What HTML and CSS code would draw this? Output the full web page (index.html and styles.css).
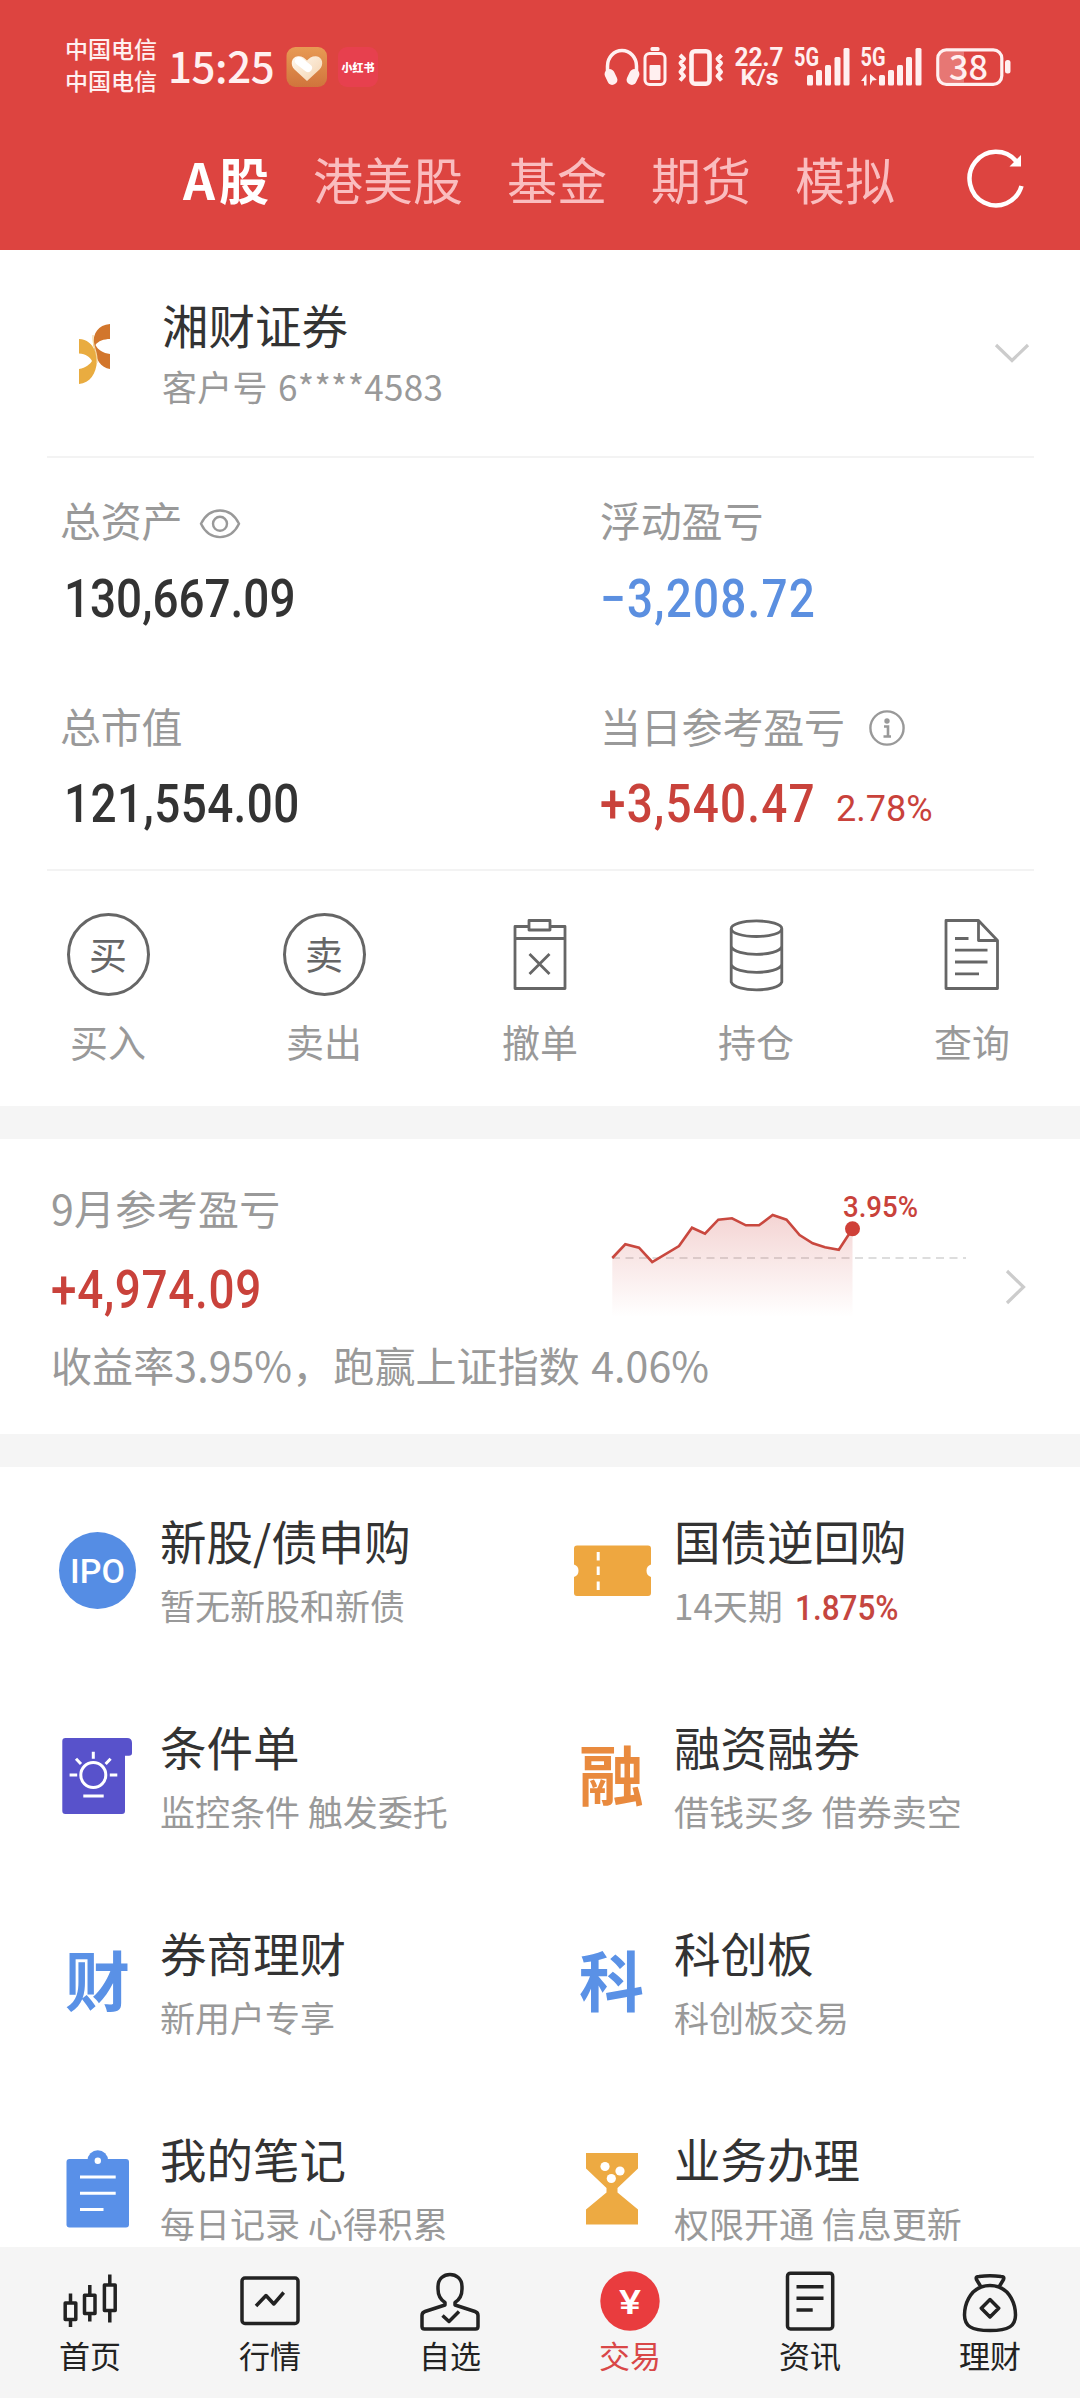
FILE: index.html
```html
<!DOCTYPE html>
<html lang="zh-CN">
<head>
<meta charset="utf-8">
<title>交易</title>
<link rel="stylesheet" href="styles.css">
</head>
<body>
<div class="app">
  <header class="header">
    <div class="status">
      <div class="carriers"><span>中国电信</span><span>中国电信</span></div>
      <div class="clock"><span>15:25</span></div>
      <svg class="app-icon" width="42" height="42" viewBox="286 45 42 42">
        <defs>
          <linearGradient id="gold" x1="0" y1="0" x2="0" y2="1"><stop offset="0" stop-color="#e89a54"/><stop offset="1" stop-color="#d0743c"/></linearGradient>
          <linearGradient id="cream" x1="0" y1="0" x2="1" y2="1"><stop offset="0" stop-color="#fff8ee"/><stop offset="1" stop-color="#f4d2ae"/></linearGradient>
        </defs>
        <rect x="286.500" y="46" width="40.500" height="40" rx="9" fill="url(#gold)"/>
        <path d="M307 80L294.500 68.500C290 64 291 56 298 55.200C302 55 305 57 307 59.500C309 57 312 55 316 55.200C323 56 324 64 319.500 68.500Z" fill="url(#cream)"/>
        <path d="M299 60L308 67" stroke="#fff" stroke-width="8" stroke-linecap="round"/>
      </svg>
      <div class="red-app"><span>小红书</span></div>
      <svg class="status-icons" width="412" height="42" viewBox="602 45 412 42" fill="#fff0f0">
        <g fill="none" stroke="#fff0f0">
          <path d="M607.500 72V65A14.500 15.500 0 0 1 636.500 65V72" stroke-width="3.500"/>
          <rect x="645" y="52.500" width="20" height="31" rx="4.500" stroke-width="3"/>
          <rect x="691.500" y="50.200" width="18" height="32.500" rx="3.500" stroke-width="4.600"/>
          <path d="M680 54L684 58L680.500 62L684 66.500L680.500 71L684 75L680 79.500M721.500 54L717.500 58L721 62L717.500 66.500L721 71L717.500 75L721.500 79.500" stroke-width="4" stroke-linejoin="round"/>
          <rect x="937.800" y="48.800" width="64" height="34.500" rx="8.500" stroke-width="3.200"/>
        </g>
        <rect x="606" y="68" width="10" height="16" rx="4.500" transform="rotate(-25 611 76)"/>
        <rect x="628" y="68" width="10" height="16" rx="4.500" transform="rotate(25 633 76)"/>
        <rect x="650.500" y="46" width="9" height="4" rx="1.500"/>
        <rect x="649.500" y="64" width="11" height="15" rx="1"/>
        <g class="net-text">
          <text x="734.500" y="64.500" textLength="49" lengthAdjust="spacingAndGlyphs">22.7</text>
          <text class="unit" x="740.500" y="84" textLength="38" lengthAdjust="spacingAndGlyphs">K/s</text>
          <text x="794" y="64.800" textLength="25" lengthAdjust="spacingAndGlyphs">5G</text>
          <text x="860.500" y="64.800" textLength="25" lengthAdjust="spacingAndGlyphs">5G</text>
        </g>
        <rect x="807" y="74" width="6" height="10.500" rx="1.500"/><rect x="816" y="69" width="6" height="15.500" rx="1.500"/><rect x="825" y="64" width="6" height="20.500" rx="1.500"/><rect x="834.500" y="56" width="6" height="28.500" rx="1.500"/><rect x="843.500" y="47" width="6" height="37.500" rx="1.500"/>
        <rect x="879" y="74" width="6" height="10.500" rx="1.500"/><rect x="888" y="69" width="6" height="15.500" rx="1.500"/><rect x="897" y="64" width="6" height="20.500" rx="1.500"/><rect x="906" y="56" width="6" height="28.500" rx="1.500"/><rect x="915.500" y="47" width="6" height="37.500" rx="1.500"/>
        <path d="M861 80L866.500 73V84.500H864V80ZM870 73L877 79L872.500 79.500L870 84.500Z"/>
        <path d="M946 50.500H964V81.500H946Q939.500 81.500 939.500 75V57Q939.500 50.500 946 50.500Z" opacity=".3"/>
        <rect x="1005" y="59" width="5.500" height="13.500" rx="2.500"/>
        <text class="battery-text" x="949" y="78.500" textLength="39" lengthAdjust="spacingAndGlyphs">38</text>
      </svg>
    </div>
    <nav class="tabs">
      <span class="tab tab-active">A股</span>
      <span class="tab">港美股</span>
      <span class="tab">基金</span>
      <span class="tab">期货</span>
      <span class="tab">模拟</span>
      <svg class="refresh" width="64" height="64" viewBox="965 147 64 64">
        <path d="M1022.500 187A26.500 26.800 0 1 1 1017 162" fill="none" stroke="#fff" stroke-width="4.500"/>
        <path d="M1022 156V167.500H1010.500Z" fill="#fff"/>
      </svg>
    </nav>
  </header>

  <main class="main">
    <section class="card">
      <div class="account">
        <svg class="broker-logo" width="34" height="64" viewBox="78 321 34 64">
          <path d="M110 323C98 324 93 332 93.500 344C95 358 101 367 110 368V353C103 352 98 349 95.500 344C98 340 104 338 110 338Z" fill="#d2762c"/>
          <path d="M79 338C87 338.500 92 343 94.500 349C96 352 97 357 97 360C96 373 90 382 79 383V368C86 367 90 363 92 360C90 356 86 353 79 352.500Z" fill="#e9ac40"/>
          <path d="M93 334C92 346 98 350 97 362" fill="none" stroke="#f5d9a0" stroke-width="1.200"/>
        </svg>
        <div class="account-text">
          <div class="broker">湘财证券</div>
          <div class="client">客户号 6****4583</div>
        </div>
        <svg width="40" height="30" viewBox="992 339 40 30"><path d="M996 345L1012 360.500L1028 345" fill="none" stroke="#ccc" stroke-width="3.200"/></svg>
      </div>
      <div class="assets">
        <div class="asset">
          <div class="label">总资产
            <svg class="eye" width="42" height="32" viewBox="199.500 508.500 42 32" fill="none" stroke="#999" stroke-width="2.400"><path d="M201.500 524.300C210 506.500 231 506.500 239.500 524.300C231 542 210 542 201.500 524.300Z"/><circle cx="220.500" cy="524.300" r="7"/></svg>
          </div>
          <div class="amount"><span class="num num-total">130,667.09</span></div>
        </div>
        <div class="asset">
          <div class="label">浮动盈亏</div>
          <div class="amount blue"><span class="num num-float">−3,208.72</span></div>
        </div>
        <div class="asset">
          <div class="label">总市值</div>
          <div class="amount"><span class="num num-market">121,554.00</span></div>
        </div>
        <div class="asset">
          <div class="label">当日参考盈亏
            <svg class="info" width="38" height="38" viewBox="868 709 38 38"><circle cx="887" cy="728" r="16.600" fill="none" stroke="#999" stroke-width="2.400"/><circle cx="887" cy="721" r="2.700" fill="#999"/><path d="M884 726.500H888V736M883.500 736.500H891" fill="none" stroke="#999" stroke-width="2.600"/></svg>
          </div>
          <div class="amount red"><span class="num num-today">+3,540.47</span><span class="pct">2.78%</span></div>
        </div>
      </div>
      <div class="actions">
        <div class="action">
          <div class="ring"><span>买</span></div>
          <span>买入</span>
        </div>
        <div class="action">
          <div class="ring"><span>卖</span></div>
          <span>卖出</span>
        </div>
        <div class="action">
          <svg class="line-icon" width="90" height="90" viewBox="495 909 90 90"><path d="M528 926.500H515V988.500H565V926.500H551M515 938.500H565M529 920.500H550V930H529ZM529.500 954L549.500 974M549.500 954L529.500 974"/></svg>
          <span>撤单</span>
        </div>
        <div class="action">
          <svg class="line-icon" width="90" height="90" viewBox="711 909 90 90"><ellipse cx="756.500" cy="928.700" rx="25.300" ry="7.800"/><path d="M731.200 928.700V982C735 992.500 778 992.500 781.800 982V928.700M731.200 946.500C735 957 778 957 781.800 946.500M731.200 964.500C735 975 778 975 781.800 964.500"/></svg>
          <span>持仓</span>
        </div>
        <div class="action">
          <svg class="line-icon" width="90" height="90" viewBox="927 909 90 90"><path d="M978.500 920.500H946V988.500H997.500V940.500ZM978.500 920.500V940.500H997.500M955 938.500H968.500M955 950.200H987.500M955 962H987.500M955 973.800H979"/></svg>
          <span>查询</span>
        </div>
      </div>
    </section>

    <section class="card profit">
      <div class="profit-body">
        <div class="profit-top">
          <div class="profit-figures">
            <div class="month">9月参考盈亏</div>
            <div class="amount red"><span class="num num-month">+4,974.09</span></div>
          </div>
          <svg class="chart" width="360" height="136" viewBox="610 1182 360 136">
            <defs><linearGradient id="fade" x1="0" y1="0" x2="0" y2="1"><stop offset="0" stop-color="#cf4642" stop-opacity=".23"/><stop offset="1" stop-color="#cf4642" stop-opacity="0"/></linearGradient></defs>
            <path d="M612 1257H966" stroke="#ddd" stroke-width="2" stroke-dasharray="8 5.500"/>
            <path d="M612.300 1257L625.300 1243.300L639 1246.700L652.200 1261L679 1245L692 1226.700L705 1232.700L718.300 1218.700L732 1217.300L745.900 1224.300H759L772.700 1214L786.500 1218.700L799.600 1234L812.700 1242.300L825 1246.300L838.800 1248.700L852.500 1227.700V1316H612.300Z" fill="url(#fade)"/>
            <path d="M612.300 1257L625.300 1243.300L639 1246.700L652.200 1261L679 1245L692 1226.700L705 1232.700L718.300 1218.700L732 1217.300L745.900 1224.300H759L772.700 1214L786.500 1218.700L799.600 1234L812.700 1242.300L825 1246.300L838.800 1248.700L852.500 1227.700" fill="none" stroke="#c9483f" stroke-width="2.600"/>
            <circle cx="852.500" cy="1227.700" r="7.500" fill="#cf4038"/>
            <text class="chart-label" x="843" y="1216" textLength="75" lengthAdjust="spacingAndGlyphs">3.95%</text>
          </svg>
        </div>
        <div class="profit-desc">收益率3.95%，跑赢上证指数 4.06%</div>
      </div>
      <svg width="30" height="44" viewBox="1000 1267 30 44"><path d="M1007 1273L1023.500 1289L1007 1305" fill="none" stroke="#ccc" stroke-width="3.200"/></svg>
    </section>

    <section class="card services">
      <div class="service">
        <svg width="110" height="130" viewBox="50 1507 110 130"><circle cx="97.500" cy="1570.500" r="38.500" fill="#558de4"/><text class="ipo" x="70" y="1583" textLength="55" lengthAdjust="spacing">IPO</text></svg>
        <div><div class="title">新股/债申购</div><div class="sub">暂无新股和新债</div></div>
      </div>
      <div class="service">
        <svg width="110" height="130" viewBox="564 1507 110 130"><path d="M577 1545.500H648Q651 1545.500 651 1548.500V1564.500Q646.500 1566 646.500 1570.700Q646.500 1575.500 651 1577V1593Q651 1596 648 1596H577Q574 1596 574 1593V1577Q578.500 1575.500 578.500 1570.700Q578.500 1566 574 1564.500V1548.500Q574 1545.500 577 1545.500Z" fill="#eea740"/><path d="M598.200 1552V1560.500M598.200 1566.500V1575M598.200 1581.500V1590" stroke="#fff" stroke-width="3"/></svg>
        <div><div class="title">国债逆回购</div><div class="sub">14天期 <span class="rate">1.875%</span></div></div>
      </div>
      <div class="service">
        <svg width="110" height="130" viewBox="50 1713 110 130"><path d="M65.500 1738H127Q132 1738 132 1743V1753Q132 1755.700 129 1755.700H125V1811Q125 1814 122 1814H65.300Q62.300 1814 62.300 1811V1741Q62.300 1738 65.500 1738Z" fill="#5852cb"/><g fill="none" stroke="#fff" stroke-width="3"><circle cx="93.300" cy="1775" r="12.500"/><path d="M69.600 1775H77.200M109.800 1775H117.300M93.300 1751.700V1758.800M76 1758.700L81 1764M110.600 1758.700L105.600 1764M83.300 1796H103.700" transform="translate(0 0)"/></g></svg>
        <div><div class="title">条件单</div><div class="sub">监控条件 触发委托</div></div>
      </div>
      <div class="service">
        <div class="glyph orange">融</div>
        <div><div class="title">融资融券</div><div class="sub">借钱买多 借券卖空</div></div>
      </div>
      <div class="service">
        <div class="glyph azure">财</div>
        <div><div class="title">券商理财</div><div class="sub">新用户专享</div></div>
      </div>
      <div class="service">
        <div class="glyph azure">科</div>
        <div><div class="title">科创板</div><div class="sub">科创板交易</div></div>
      </div>
      <div class="service">
        <svg width="110" height="130" viewBox="50 2125 110 130"><rect x="66.500" y="2159" width="62.500" height="68.500" rx="3" fill="#5990e8"/><circle cx="97.800" cy="2160.500" r="10.300" fill="#5990e8"/><circle cx="97.800" cy="2160.800" r="3.200" fill="#fff"/><path d="M80 2177H115.700M80 2193.300H115.700M80 2209.500H103.500" stroke="#fff" stroke-width="3"/></svg>
        <div><div class="title">我的笔记</div><div class="sub">每日记录 心得积累</div></div>
      </div>
      <div class="service">
        <svg width="110" height="130" viewBox="564 2125 110 130"><path d="M586 2153H638V2168.500L617.500 2188V2192.500L638 2209.500V2224.500H586V2209.500L606.500 2192.500V2188L586 2168.500Z" fill="#edaa42"/><g fill="#fff"><circle cx="605" cy="2166.500" r="4.600"/><circle cx="620" cy="2171" r="4.600"/><circle cx="611.300" cy="2178.500" r="4.600"/></g></svg>
        <div><div class="title">业务办理</div><div class="sub">权限开通 信息更新</div></div>
      </div>
    </section>
  </main>

  <nav class="tabbar">
    <div class="nav-item">
      <svg class="nav-icon" width="80" height="70" viewBox="50 2266 80 70"><path d="M65.200 2303H75.800V2319.500H65.200ZM70.500 2293.500V2303M70.500 2319.500V2327M84.500 2295.300H95V2313.500H84.500ZM89.800 2285V2295.300M89.800 2313.500V2321.500M104.400 2285H115.200V2310.500H104.400ZM109.800 2274.500V2285M109.800 2310.500V2322.500"/></svg>
      <span>首页</span>
    </div>
    <div class="nav-item">
      <svg class="nav-icon" width="80" height="70" viewBox="230 2266 80 70"><rect x="242" y="2278" width="56" height="45.500" rx="3"/><path d="M256 2306L266 2295.500L273.800 2304L283.700 2292.500"/></svg>
      <span>行情</span>
    </div>
    <div class="nav-item">
      <svg class="nav-icon" width="80" height="70" viewBox="410 2266 80 70"><path d="M445 2302.500C439.500 2299 438 2295 438 2289V2286.500C438 2270.500 462 2270.500 462 2286.500V2289C462 2295 460.500 2299 455 2302.500V2305L475 2311.500Q478 2312.500 478 2315.500V2326.500Q478 2329 475.500 2329H424.500Q422 2329 422 2326.500V2315.500Q422 2312.500 425 2311.500L445 2305ZM442.500 2315.500L449 2321.500L459 2311.500"/></svg>
      <span>自选</span>
    </div>
    <div class="nav-item nav-active">
      <svg class="nav-icon" width="80" height="70" viewBox="590 2266 80 70"><circle class="coin" cx="630" cy="2301" r="29.700"/><text class="yen" x="619" y="2313.500" textLength="22" lengthAdjust="spacingAndGlyphs">¥</text></svg>
      <span>交易</span>
    </div>
    <div class="nav-item">
      <svg class="nav-icon" width="80" height="70" viewBox="770 2266 80 70"><rect x="787.500" y="2273.200" width="45.200" height="55.800" rx="3"/><path d="M796.500 2286.700H823.500M796.500 2298.300H823.500M796.500 2310H812.700"/></svg>
      <span>资讯</span>
    </div>
    <div class="nav-item">
      <svg class="nav-icon" width="80" height="70" viewBox="950 2266 80 70"><path d="M981 2287L976.500 2279.500C975.500 2277 977 2276.500 979 2276.500C986 2275.500 994 2275.500 1001 2276.500C1003 2276.500 1004.500 2277 1003.500 2279.500L999 2287M981 2287C970 2291 964.500 2304 964.500 2315C964.500 2326 971 2330.500 990 2330.500C1009 2330.500 1015.500 2326 1015.500 2315C1015.500 2304 1010 2291 999 2287C993 2285 987 2285 981 2287ZM990 2299.500L998.700 2308.200L990 2317L981.300 2308.200Z"/></svg>
      <span>理财</span>
    </div>
  </nav>
</div>
</body>
</html>
```
FILE: styles.css
```css
* { box-sizing: border-box; }

body {
  margin: 0;
  background: #fff;
  color: #333;
  font-family: "Noto Sans CJK SC", sans-serif;
}

svg { display: block; flex: none; overflow: visible; }

.app {
  width: 1080px;
  height: 2398px;
  display: flex;
  flex-direction: column;
  overflow: hidden;
}

/* Header */
.header {
  flex: none;
  height: 250px;
  padding-top: 34px;
  background: #dd4440;
  color: #fff;
}

.status {
  display: flex;
  align-items: center;
  height: 65px;
  padding-left: 65px;
}

.carriers {
  width: 103px;
  padding-bottom: 5px;
  display: flex;
  flex-direction: column;
  font-size: 23px;
  font-weight: 500;
  line-height: 32.500px;
  color: #fff0f0;
}

.clock {
  width: 118px;
  padding-bottom: 4px;
  font-size: 42px;
  font-weight: 500;
  line-height: 60px;
  color: #fff0f0;
  white-space: nowrap;
}

.clock span { letter-spacing: -.4px; }

.red-app {
  width: 40px;
  height: 40px;
  margin: 0 224px 0 10px;
  border-radius: 9px;
  background: #e7404e;
  display: flex;
  align-items: center;
  justify-content: center;
  font-size: 11px;
  font-weight: 900;
  line-height: 16px;
  white-space: nowrap;
}

.net-text text { font: 700 25px Roboto, sans-serif; }
.net-text .unit { font-size: 22px; }
.battery-text { font: 500 34px "Noto Sans CJK SC", sans-serif; }

.tabs {
  display: flex;
  align-items: center;
  gap: 45px;
  height: 80px;
  margin-top: 39px;
  padding-left: 183px;
  font-size: 50px;
  line-height: 80px;
  color: #fabdbf;
}

.tab { margin-right: -1px; white-space: nowrap; }
.tab-active { width: 86px; color: #fff; font-weight: 700; letter-spacing: 4px; }
.refresh { margin-left: 25px; }

/* Main */
.main {
  flex: 1;
  min-height: 0;
  overflow: hidden;
  display: flex;
  flex-direction: column;
  gap: 33px;
  background: #f5f5f5;
}

.card { flex: none; background: #fff; }

.account {
  display: flex;
  align-items: center;
  height: 208px;
  margin: 0 46px 0 47px;
  padding: 2px 2px 0 31px;
  border-bottom: 2px solid #f3f3f3;
}

.account-text { flex: 1; padding-left: 50px; }
.broker { font-size: 46.500px; line-height: 64px; }
.client { font-size: 35px; line-height: 60px; letter-spacing: .3px; word-spacing: 2px; color: #999; }

.assets {
  display: grid;
  grid-template-columns: 540px 1fr;
  row-gap: 66px;
  margin: 0 46px 0 47px;
  padding: 31px 0 35px 13px;
  border-bottom: 2px solid #f3f3f3;
}

.label {
  display: flex;
  align-items: center;
  font-size: 41px;
  line-height: 60px;
  letter-spacing: -.2px;
  color: #999;
}

.eye { margin: 10px 0 0 17px; }
.info { margin: 6px 0 0 23px; }

.asset .amount { margin-top: 19.500px; }

.amount {
  display: flex;
  height: 60px;
  font-family: Roboto, sans-serif;
  font-size: 53px;
  font-weight: 500;
  line-height: 60px;
}

/* Figures are set slightly condensed */
.num { transform: scaleX(.865); transform-origin: left; }
.num-total { margin-left: 4px; }
.num-market { margin-left: 4px; letter-spacing: .5px; }
.num-float { letter-spacing: 1.400px; }
.num-today { width: 236px; letter-spacing: 1.400px; }
.num-month { letter-spacing: .8px; }

.pct {
  font-size: 36px;
  font-weight: 400;
  line-height: 70px;
}

.blue { color: #5b8fe0; }
.red { color: #c9423b; }

.actions {
  display: grid;
  grid-template-columns: repeat(5, 1fr);
  height: 235px;
  padding-top: 38px;
}

.action {
  display: flex;
  flex-direction: column;
  align-items: center;
  gap: 17px;
  font-size: 38px;
  line-height: 50px;
  color: #999;
}

.ring {
  width: 83px;
  height: 83px;
  margin: 4px 0 3px;
  padding-bottom: 4px;
  border: 3px solid #666;
  border-radius: 50%;
  display: flex;
  align-items: center;
  justify-content: center;
  font-size: 38px;
  color: #666;
}

.line-icon { fill: none; stroke: #666; stroke-width: 2.800; stroke-linejoin: round; }

/* Monthly profit */
.profit {
  display: flex;
  align-items: center;
  height: 295px;
  padding: 0 50px 0 51px;
}

.profit-body { flex: 1; }
.profit-top { display: flex; height: 136px; }
.profit-figures { width: 559px; }
.month { margin: -1px 0 28px; font-size: 41px; line-height: 50px; letter-spacing: .3px; color: #999; }
.profit-desc { margin-top: 20px; padding-bottom: 2px; font-size: 41px; line-height: 50px; letter-spacing: .1px; word-spacing: 2px; color: #999; }
.chart-label { font: 500 30px Roboto, sans-serif; fill: #c9423b; }

/* Services */
.services {
  display: grid;
  grid-template-columns: 514px 1fr;
  grid-auto-rows: 206px;
  padding: 40px 0 0 50px;
}

.service { display: flex; white-space: nowrap; }
.title { font-size: 46.500px; line-height: 66px; }
.sub { font-size: 35px; line-height: 64px; color: #999; }

.rate {
  display: inline-block;
  margin-left: 4px;
  font-family: Roboto, sans-serif;
  font-weight: 500;
  line-height: 40px;
  color: #c5463f;
  transform: scaleX(.9);
  transform-origin: left;
}

.ipo { font: 500 34px Roboto, sans-serif; fill: #fff; }

.glyph {
  width: 110px;
  height: 130px;
  padding-left: 15px;
  font-size: 65px;
  font-weight: 700;
  line-height: 118px;
}

.orange { color: #e98a3e; }
.azure { color: #5a91e6; }

/* Tab bar */
.tabbar {
  flex: none;
  display: grid;
  grid-template-columns: repeat(6, 1fr);
  height: 151px;
  padding-top: 19px;
  background: #f5f5f5;
}

.nav-item {
  display: flex;
  flex-direction: column;
  align-items: center;
  font-size: 31px;
  line-height: 38px;
  color: #222;
}

.nav-icon { fill: none; stroke: #222; stroke-width: 3.500; stroke-linejoin: round; }
.nav-active { color: #d94747; }
.coin { fill: #e93c3e; stroke: none; }
.yen { font: 500 34px Roboto, sans-serif; fill: #fff; stroke: none; }
```
